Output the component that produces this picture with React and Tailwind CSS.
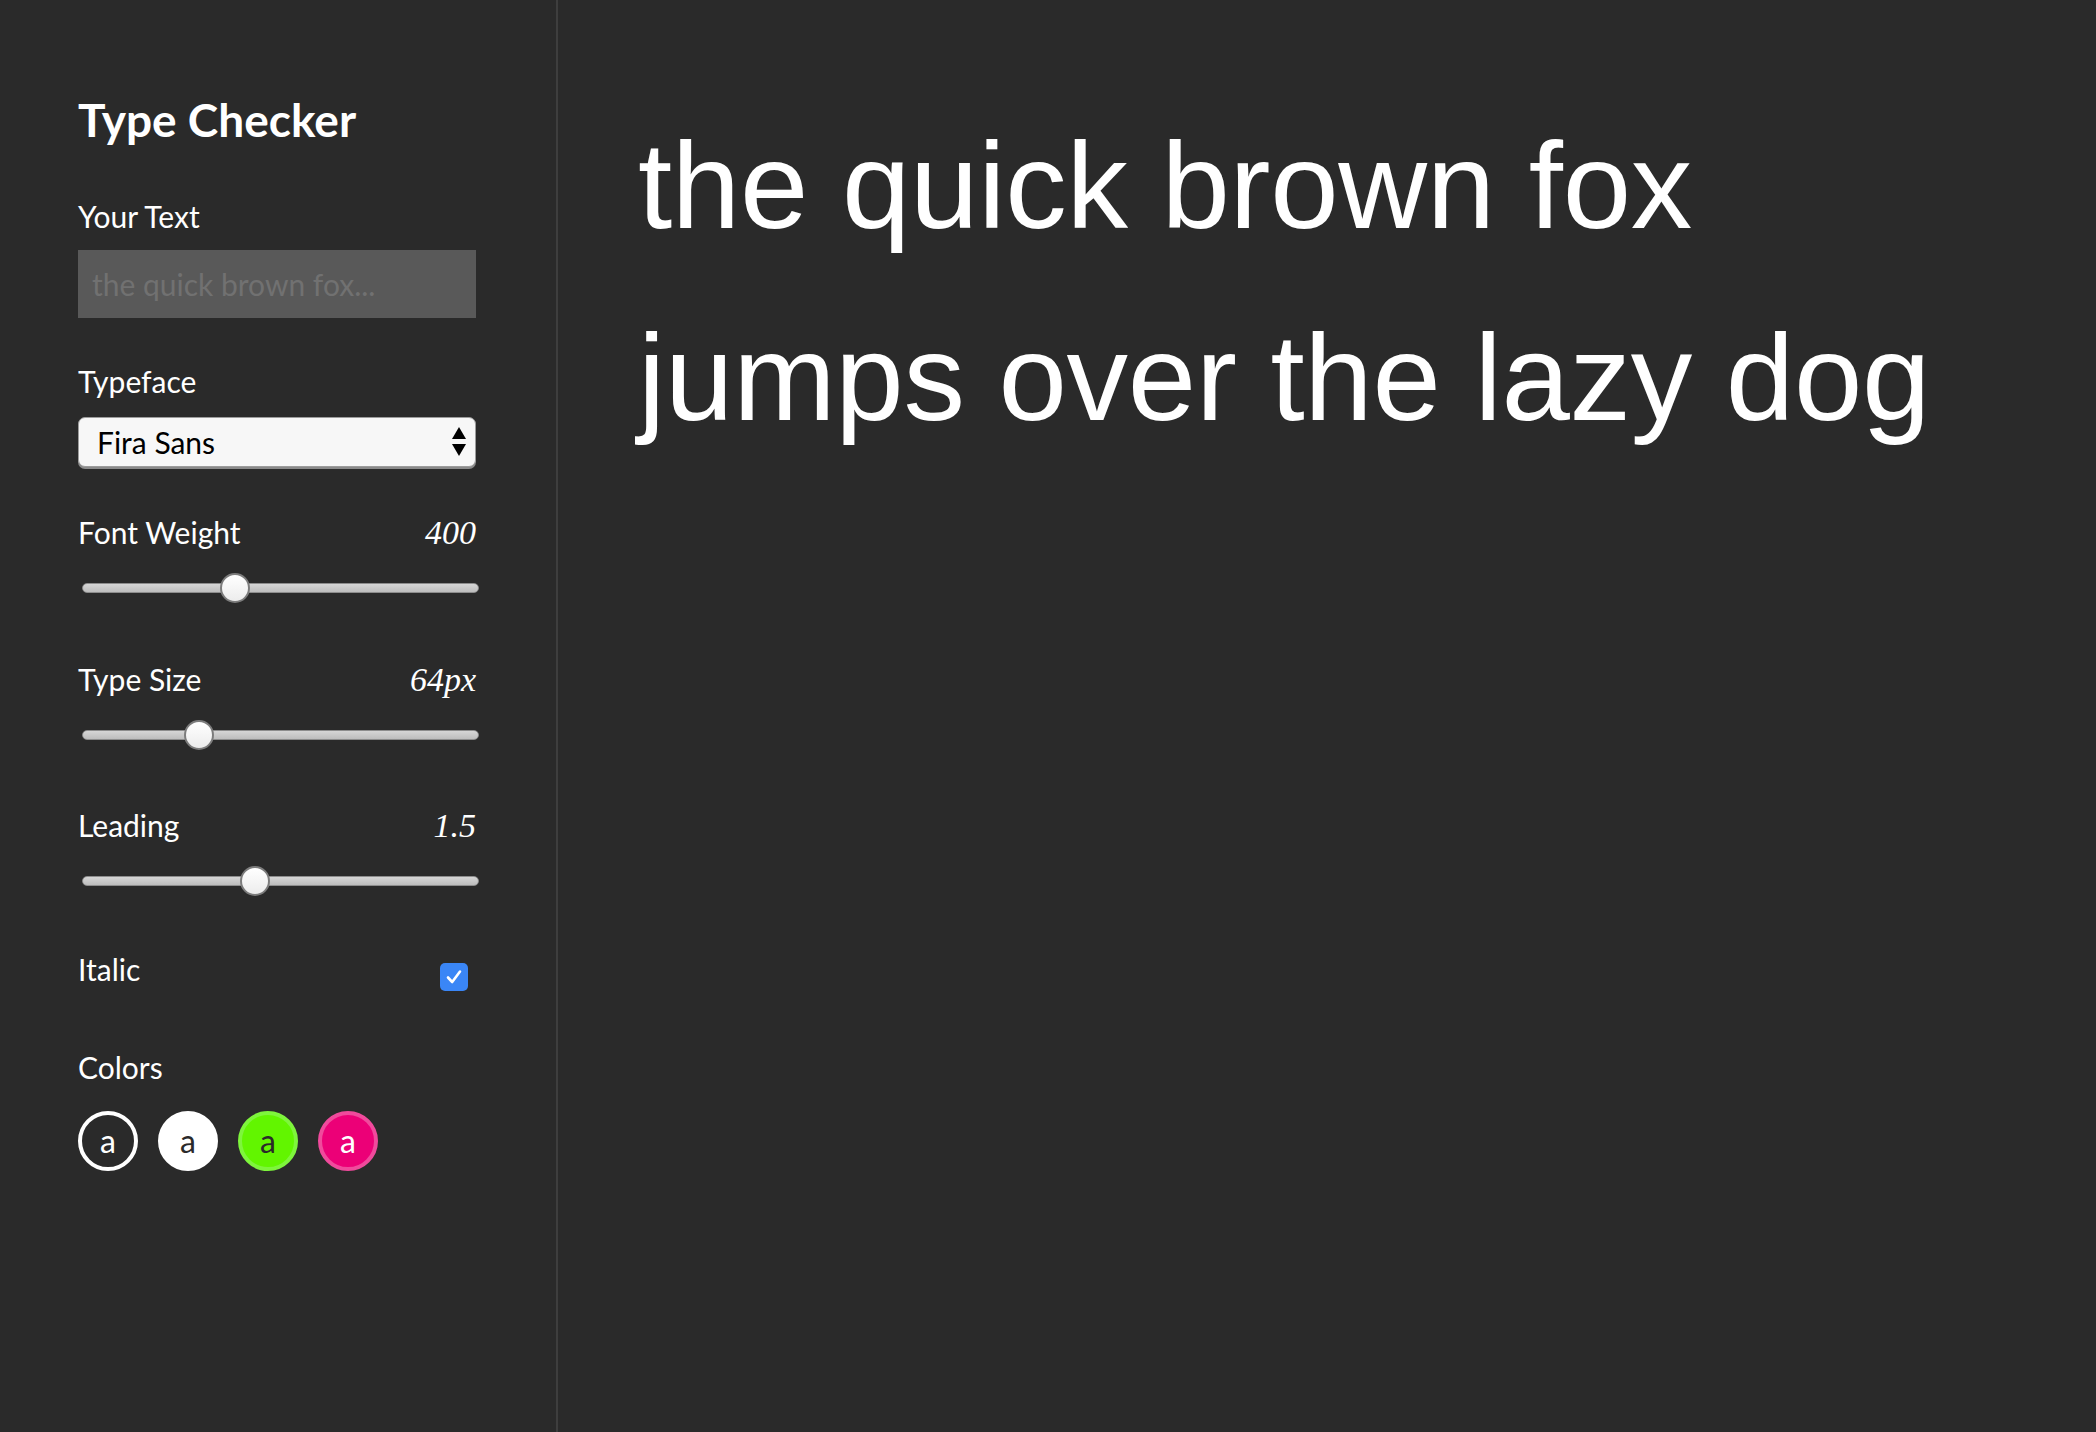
import React from "react";

function Label({ children, value, className }) {
  return (
    <div className={`flex items-baseline justify-between ${className}`}>
      <span className="text-[30px] leading-[36px]">{children}</span>
      {value ? (
        <span className="font-['Liberation_Serif',serif] text-[34px] italic leading-[36px]">{value}</span>
      ) : null}
    </div>
  );
}

function Slider({ thumb }) {
  return (
    <div className="relative mt-[22px] ml-[4px] h-[30px] w-[397px]">
      <div className="absolute left-0 right-0 top-[10px] h-[10px] rounded-full border border-[#8d8d8d] bg-[linear-gradient(#d6d6d6,#bdbdbd)]" />
      <div
        className={`absolute top-0 h-[30px] w-[30px] rounded-full border-2 border-[#7c7c7c] bg-[linear-gradient(#ffffff,#ececec)] ${thumb}`}
      />
    </div>
  );
}

export default function App() {
  return (
    <div className="flex min-h-screen bg-[#2a2a2a] text-white">
      <aside className="w-[558px] shrink-0 border-r-2 border-[#3e3e3e] pl-[78px] pr-[80px] pt-[92px] font-['Lato',sans-serif]">
        <h1 className="text-[46px] font-bold leading-[55px]">Type Checker</h1>

        <Label className="mt-[51px]">Your Text</Label>
        <input
          className="mt-[16px] block h-[68px] w-[398px] bg-[#595959] pl-[14px] text-[30px] leading-[36px] text-white outline-none placeholder:text-[#717171]"
          placeholder="the quick brown fox..."
        />

        <Label className="mt-[45px]">Typeface</Label>
        <div className="mt-[18px] flex h-[50px] w-[398px] items-center justify-between rounded-[7px] border border-[#9c9c9c] bg-[#f7f7f7] pl-[18px] pr-[9px] shadow-[0_2px_0_#8a8a8a]">
          <span className="text-[30px] leading-[36px] text-black">Fira Sans</span>
          <svg width="14" height="30" viewBox="0 0 14 30" className="block">
            <path d="M7 0 L14 12 L0 12 Z" fill="#000" />
            <path d="M0 17 L14 17 L7 29 Z" fill="#000" />
          </svg>
        </div>

        <Label className="mt-[47px]" value="400">Font Weight</Label>
        <Slider thumb="left-[138px]" />

        <Label className="mt-[58px]" value="64px">Type Size</Label>
        <Slider thumb="left-[102px]" />

        <Label className="mt-[57px]" value="1.5">Leading</Label>
        <Slider thumb="left-[158px]" />

        <div className="mt-[55px] flex items-start justify-between">
          <span className="text-[30px] leading-[36px]">Italic</span>
          <div className="mr-[8px] mt-[12px] flex h-[28px] w-[28px] items-center justify-center rounded-[5px] bg-[#3a86f6]">
            <svg width="20" height="20" viewBox="0 0 20 20">
              <path d="M4 10.5 L8.2 15 L16 4.5" fill="none" stroke="#fff" strokeWidth="2.6" strokeLinecap="round" strokeLinejoin="round" />
            </svg>
          </div>
        </div>

        <Label className="mt-[58px]">Colors</Label>
        <div className="mt-[26px] flex gap-[20px]">
          <div className="flex h-[60px] w-[60px] items-center justify-center rounded-full border-4 border-white text-[32px] leading-none text-white">
            a
          </div>
          <div className="flex h-[60px] w-[60px] items-center justify-center rounded-full border-4 border-white bg-white text-[32px] leading-none text-[#2a2a2a]">
            a
          </div>
          <div className="flex h-[60px] w-[60px] items-center justify-center rounded-full border-4 border-[#7ef53c] bg-[#62f500] text-[32px] leading-none text-[#2a2a2a]">
            a
          </div>
          <div className="flex h-[60px] w-[60px] items-center justify-center rounded-full border-4 border-[#f04a9c] bg-[#ec0077] text-[32px] leading-none text-white">
            a
          </div>
        </div>
      </aside>

      <main className="flex-1 pl-[80px] pt-[90px] font-['Liberation_Sans',sans-serif] text-[123px] leading-[192px] tracking-[-0.3px] text-white">
        <div>the quick brown fox</div>
        <div>jumps over the lazy dog</div>
      </main>
    </div>
  );
}
